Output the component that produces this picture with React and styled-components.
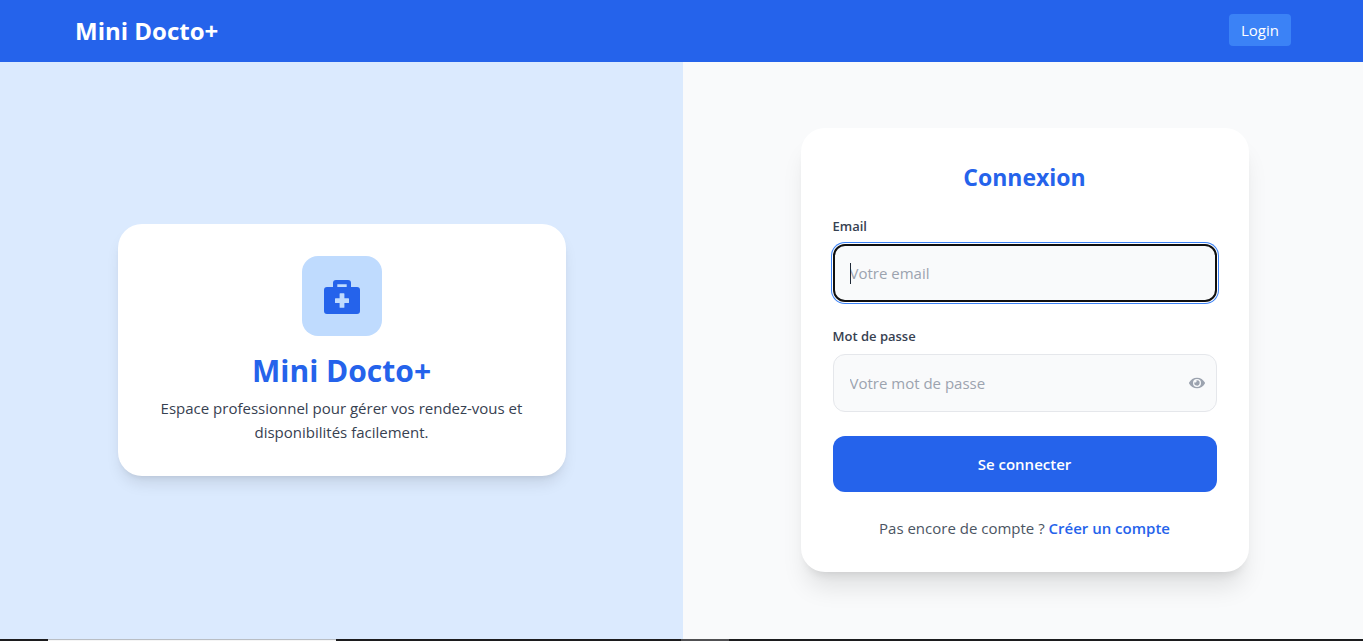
import React from "react";
import styled, { createGlobalStyle } from "styled-components";
import { FaEye } from "react-icons/fa";

const GlobalStyle = createGlobalStyle`
  *, *::before, *::after { box-sizing: border-box; }
  body {
    margin: 0;
    overflow-x: hidden;
    font-family: "Segoe UI", "Open Sans", "Noto Sans", sans-serif;
    font-size: 16px;
    line-height: 24px;
    color: #1f2937;
  }
  h1, h2, p { margin: 0; }
  a { text-decoration: none; }
  button, input { font: inherit; }
`;

const Page = styled.div`
  min-height: 100vh;
  margin-right: -3px;
  display: flex;
  flex-direction: column;
`;

const Header = styled.header`
  background: #2563eb;
  padding: 14px 75px;
  display: flex;
  align-items: flex-start;
  justify-content: space-between;
`;

const Brand = styled.a`
  color: #fff;
  font-size: 24px;
  font-weight: 700;
  line-height: 34px;
`;

const LoginLink = styled.a`
  background: #3b82f6;
  color: #fff;
  font-size: 15px;
  line-height: 24px;
  padding: 4px 12px;
  border-radius: 4px;
`;

const Main = styled.main`
  flex: 1;
  display: grid;
  grid-template-columns: 1fr 1fr;
`;

const Panel = styled.section`
  background: ${(p) => p.$background};
  padding: 32px 32px 34px;
  display: flex;
  align-items: center;
  justify-content: center;
`;

const Card = styled.div`
  width: 100%;
  max-width: 448px;
  padding: 32px;
  border-radius: 24px;
  background: #fff;
  box-shadow: ${(p) =>
    p.$raised
      ? "0 20px 25px -5px rgba(0,0,0,.1), 0 8px 10px -6px rgba(0,0,0,.1)"
      : "0 10px 15px -3px rgba(0,0,0,.1), 0 4px 6px -4px rgba(0,0,0,.1)"};
`;

const Intro = styled(Card)`
  display: flex;
  flex-direction: column;
  align-items: center;
  text-align: center;
`;

const IconTile = styled.div`
  width: 80px;
  height: 80px;
  margin-bottom: 16px;
  border-radius: 16px;
  background: #bfdbfe;
  color: #2563eb;
  display: flex;
  align-items: center;
  justify-content: center;
`;

const IntroTitle = styled.h1`
  margin-bottom: 6px;
  color: #2563eb;
  font-size: 30px;
  line-height: 38px;
  font-weight: 700;
`;

const IntroText = styled.p`
  font-size: 15px;
  color: #374151;
`;

const FormTitle = styled.h2`
  margin-bottom: 22px;
  color: #2563eb;
  font-size: 23px;
  line-height: 34px;
  font-weight: 700;
  text-align: center;
`;

const Form = styled.form`
  display: flex;
  flex-direction: column;
  gap: 24px;
`;

const Field = styled.div`
  display: flex;
  flex-direction: column;
  gap: 8px;
`;

const Label = styled.label`
  color: #374151;
  font-size: 13px;
  line-height: 20px;
  font-weight: 600;
`;

const InputWrap = styled.div`
  position: relative;
  display: flex;
`;

const Input = styled.input`
  width: 100%;
  height: 58px;
  padding: 0 ${(p) => (p.$active ? 15 : 16)}px;
  border: ${(p) => (p.$active ? "2px solid #101010" : "1px solid #e5e7eb")};
  border-radius: 12px;
  background: #f9fafb;
  box-shadow: ${(p) => (p.$active ? "0 0 0 1px #fff, 0 0 0 2px #3b82f6" : "none")};
  color: #1f2937;
  font-size: 15px;
  outline: none;
  caret-color: transparent;
  &::placeholder { color: #9ca3af; opacity: 1; }
`;

const Caret = styled.span`
  position: absolute;
  left: 17px;
  top: 19px;
  width: 1px;
  height: 21px;
  background: #1f2937;
`;

const RevealButton = styled.button`
  position: absolute;
  right: 12px;
  top: 21px;
  display: flex;
  padding: 0;
  border: 0;
  background: none;
  color: #9ca3af;
  cursor: pointer;
`;

const SubmitButton = styled.button`
  padding: 16px;
  border: 0;
  border-radius: 12px;
  background: #2563eb;
  color: #fff;
  font-size: 15px;
  line-height: 24px;
  font-weight: 600;
  cursor: pointer;
`;

const SignupLine = styled.p`
  color: #4b5563;
  font-size: 15px;
  text-align: center;
`;

const SignupLink = styled.a`
  color: #2563eb;
  font-weight: 600;
`;

const BottomBar = styled.div`
  height: 2px;
  display: flex;
  background: #1c1c1e;
`;

const BarSegment = styled.span`
  width: ${(p) => p.$width}px;
  background: ${(p) => p.$color};
  border-top: 1px solid ${(p) => p.$edge};
`;

function MedicalBag() {
  return (
    <svg width="36" height="36" viewBox="0 0 36 36" fill="currentColor" aria-hidden="true">
      <path
        fillRule="evenodd"
        d="M9 9V5a3 3 0 0 1 3-3h12a3 3 0 0 1 3 3v4h6a3 3 0 0 1 3 3v21a3 3 0 0 1-3 3H3a3 3 0 0 1-3-3V12a3 3 0 0 1 3-3h6zM13.300 6.200V9h9.400V6.200zM16.200 15.200a.6.6 0 0 0-.6.6v4.400h-4a.6.6 0 0 0-.6.600v3.600a.6.6 0 0 0 .6.600h4v4.200a.6.6 0 0 0 .6.600h3.600a.6.6 0 0 0 .6-.6v-4.200h4a.6.6 0 0 0 .6-.6v-3.600a.6.6 0 0 0-.6-.6h-4v-4.400a.6.6 0 0 0-.6-.6z"
      />
    </svg>
  );
}

export default function App() {
  return (
    <Page>
      <GlobalStyle />
      <Header>
        <Brand href="#">Mini Docto+</Brand>
        <LoginLink href="#login">Login</LoginLink>
      </Header>
      <Main>
        <Panel $background="#dbeafe">
          <Intro>
            <IconTile>
              <MedicalBag />
            </IconTile>
            <IntroTitle>Mini Docto+</IntroTitle>
            <IntroText>
              Espace professionnel pour gérer vos rendez-vous et disponibilités facilement.
            </IntroText>
          </Intro>
        </Panel>
        <Panel $background="#f9fafb">
          <Card $raised>
            <FormTitle>Connexion</FormTitle>
            <Form onSubmit={(e) => e.preventDefault()}>
              <Field>
                <Label htmlFor="email">Email</Label>
                <InputWrap>
                  <Input id="email" type="email" placeholder="Votre email" $active />
                  <Caret />
                </InputWrap>
              </Field>
              <Field>
                <Label htmlFor="password">Mot de passe</Label>
                <InputWrap>
                  <Input id="password" type="password" placeholder="Votre mot de passe" />
                  <RevealButton type="button" aria-label="Afficher le mot de passe">
                    <FaEye size={16} />
                  </RevealButton>
                </InputWrap>
              </Field>
              <SubmitButton type="submit">Se connecter</SubmitButton>
              <SignupLine>
                Pas encore de compte ? <SignupLink href="#register">Créer un compte</SignupLink>
              </SignupLine>
            </Form>
          </Card>
        </Panel>
      </Main>
      <BottomBar>
        <BarSegment $width={48} $color="#1c1c1e" $edge="#1c1c1e" />
        <BarSegment $width={288} $color="#f5f5f5" $edge="#b9bec4" />
        <BarSegment $width={345} $color="#1c1c1e" $edge="#1c1c1e" />
        <BarSegment $width={48} $color="#505052" $edge="#505052" />
      </BottomBar>
    </Page>
  );
}
